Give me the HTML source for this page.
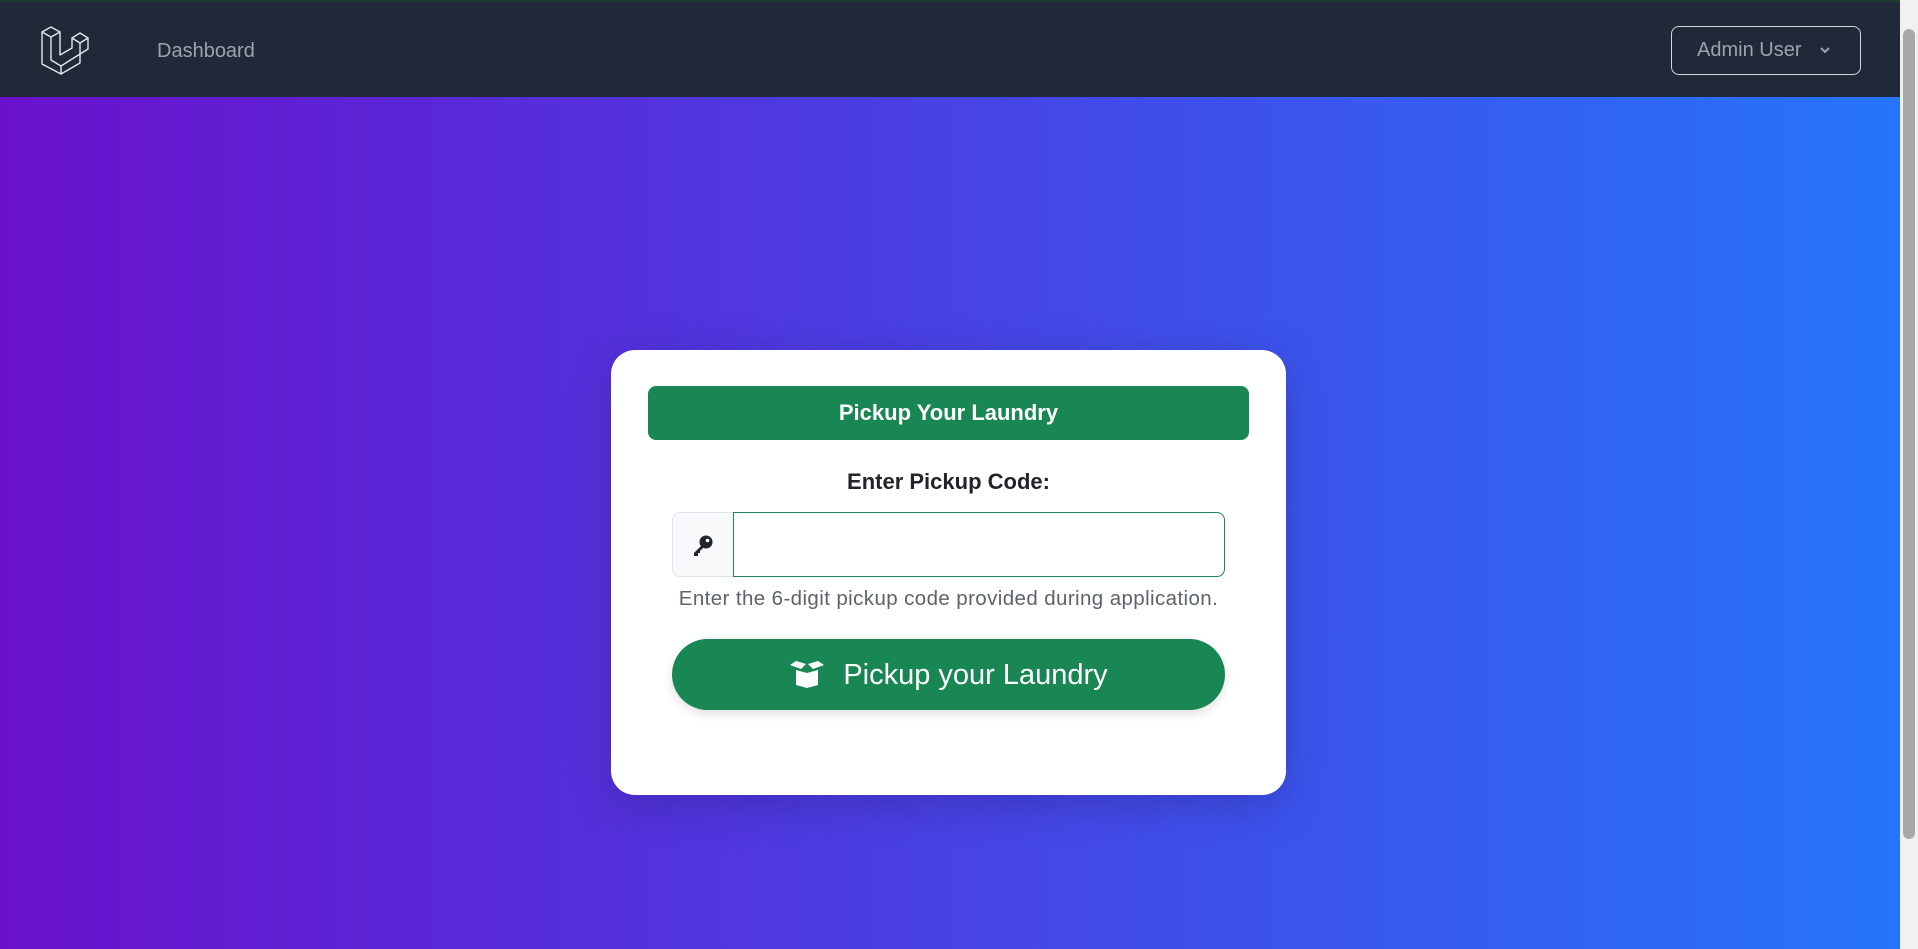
<!DOCTYPE html>
<html><head><meta charset="utf-8"><style>
*{box-sizing:border-box;margin:0;padding:0}
html,body{width:1918px;height:949px;overflow:hidden;font-family:"Liberation Sans",sans-serif}
body{background:linear-gradient(to right,#6a11cb,#2575fc);position:relative}
.nav{position:absolute;left:0;top:0;width:1900px;height:97px;background:#1f2937;border-top:2px solid #1e3a2f}
.logo{position:absolute;left:0;top:0}
.dash{position:absolute;left:157px;top:38px;font-size:20px;color:#9ca3af}
.admin{position:absolute;left:1671px;top:24px;width:190px;height:49px;border:1.5px solid #d1d5db;border-radius:8px;color:#9ca3af;font-size:20px;line-height:46px;padding-left:25px}
.admin svg{position:absolute;left:147px;top:19px}
.scroll{position:absolute;left:1900px;top:0;width:18px;height:949px;background:#f1f1f1}
.thumb{position:absolute;left:3px;top:29px;width:12px;height:810px;background:#a8a8a8;border-radius:6px}
.card{position:absolute;left:611px;top:350px;width:675px;height:445px;background:#fff;border-radius:24px;box-shadow:0 10px 40px rgba(40,30,120,.35)}
.hdr{position:absolute;left:37px;top:36px;width:601px;height:54px;background:#198754;border-radius:8px;color:#fff;font-weight:bold;font-size:22px;text-align:center;line-height:54px}
.lbl{position:absolute;left:0;width:675px;top:119px;text-align:center;font-size:22px;font-weight:bold;color:#212529}
.ig{position:absolute;left:61px;top:162px;width:553px;height:65px}
.add{position:absolute;left:0;top:0;width:62px;height:65px;background:#f8f9fa;border:1px solid #dee2e6;border-radius:8px 0 0 8px}
.add svg{position:absolute;left:18px;top:20px}
.inp{position:absolute;left:61px;top:0;width:492px;height:65px;border:1.5px solid #198754;border-radius:0 8px 8px 0}
.help{position:absolute;left:0;width:675px;top:237px;text-align:center;font-size:20.5px;letter-spacing:.4px;color:#5c636a}
.btn{position:absolute;left:61px;top:289px;width:553px;height:71px;background:#198754;border-radius:36px;color:#fff;font-size:29px;text-align:center;line-height:73px;box-shadow:0 4px 10px rgba(0,0,0,.12)}
.btn svg{vertical-align:-4px;margin-right:18px}
</style></head><body>
<div class="nav">
<svg class="logo" width="100" height="97" viewBox="0 0 100 97" fill="none" stroke="#e5e7eb" stroke-width="1.4" stroke-linejoin="round" stroke-linecap="round">
<path d="M42 30 L51 25 L60 30 L51 35 Z M42 30 L42 62 M51 35 L51 58 M60 30 L60 53 M72 36 L80 31 L88 36 L80 41 Z M72 36 L72 46 M80 41 L80 52 M88 36 L88 47 M42 62 L61 72 L80 61 L80 52 M61 72 L61 64 M51 58 L61 64 L88 47 M60 53 L72 46"/>
</svg>
<div class="dash">Dashboard</div>
<div class="admin">Admin User<svg width="12" height="8" viewBox="0 0 12 8"><path d="M2 2 L6 6 L10 2" stroke="#9ca3af" stroke-width="2" fill="none"/></svg></div>
</div>
<div class="scroll"><div class="thumb"></div></div>
<div class="card">
<div class="hdr">Pickup Your Laundry</div>
<div class="lbl">Enter Pickup Code:</div>
<div class="ig"><div class="add"><svg width="24" height="24" viewBox="0 0 24 24"><circle cx="15" cy="9" r="6.5" fill="#212529"/><circle cx="16.5" cy="7.5" r="1.8" fill="#f8f9fa"/><path d="M11 12 L3 20 L3 23 L7 23 L7 20 L9 20 L9 18 L13 14 Z" fill="#212529"/></svg></div><div class="inp"></div></div>
<div class="help">Enter the 6-digit pickup code provided during application.</div>
<div class="btn"><svg width="36" height="28" viewBox="0 0 36 28" fill="#fff"><path d="M7 10 L18 13 L29 10 L29 25 L18 28 L7 25 Z"/><path d="M1 5 L7 1 L17 4 L12 9 Z M35 5 L29 1 L19 4 L24 9 Z"/></svg>Pickup your Laundry</div>
</div>
</body></html>
